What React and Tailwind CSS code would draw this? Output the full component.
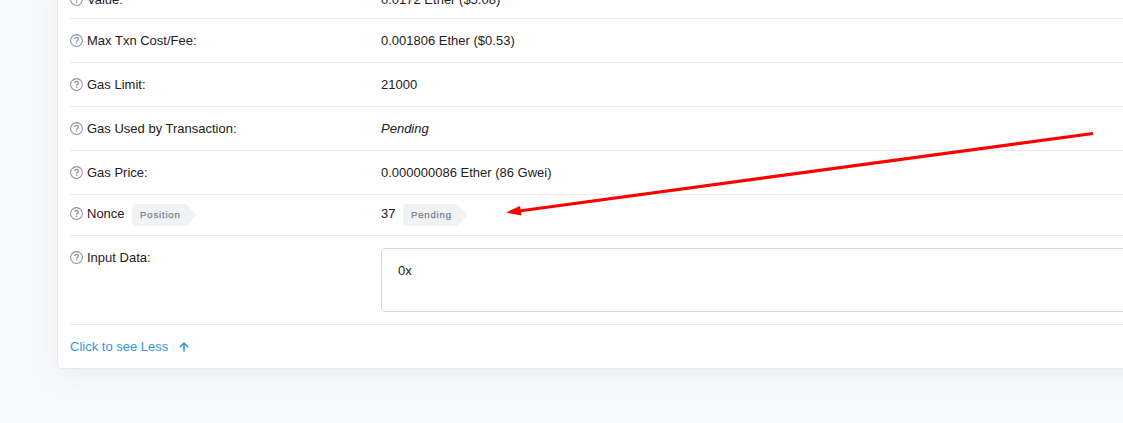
function HelpIcon({ className = "" }) {
  return (
    <svg className={"mr-1 h-[13px] w-[13px] shrink-0 " + className} viewBox="0 0 13 13" fill="none" stroke="#8792a0">
      <circle cx="6.5" cy="6.5" r="5.9" strokeWidth="1.05" />
      <path d="M4.7 5.1C4.8 3.9 5.6 3.4 6.5 3.4c1.1 0 1.9.6 1.9 1.6 0 1.3-1.8 1.3-1.8 2.7" strokeWidth="1.25" />
      <path d="M5.9 9.2h1.4" strokeWidth="1.3" />
    </svg>
  );
}

function Tag({ children }) {
  return (
    <span className="mt-[2px] ml-[7.5px] flex h-[22px] items-center">
      <span className="flex h-full w-[54px] items-center rounded-l-[4px] bg-[#f1f2f4] pl-2 text-[9.6px] tracking-[0.8px] text-[#77838f] [-webkit-text-stroke:0.25px_#77838f]">
        {children}
      </span>
      <svg className="h-[22px] w-[11px]" viewBox="0 0 11 22" fill="#f1f2f4">
        <path d="M0 0 L10.5 11 L0 22Z" />
      </svg>
    </span>
  );
}

function Row({ label, tag, className = "h-11", iconClass, children }) {
  return (
    <div className={"flex shrink-0 items-center border-b border-[#e7eaf3] " + className}>
      <div className="flex w-[311px] shrink-0 items-center">
        <HelpIcon className={iconClass} />
        <span>{label}</span>
        {tag}
      </div>
      {children}
    </div>
  );
}

export default function App() {
  return (
    <div className="relative h-[423px] w-[1123px] overflow-hidden bg-[#f8f9fb] font-['Liberation_Sans',Arial,sans-serif] text-[13px] leading-5 text-[#1e2022]">
      <div className="-mt-[25px] ml-[57px] flex h-[394px] w-[1140px] flex-col rounded-[4px] border border-[#e7eaf3] bg-white pl-3 shadow-[0_8px_24px_rgba(140,152,164,0.11)]">
        <Row label="Value:" className="h-[43px] pt-[6px]" iconClass="mb-[2px]">0.0172 Ether ($5.08)</Row>
        <Row label="Max Txn Cost/Fee:">0.001806 Ether ($0.53)</Row>
        <Row label="Gas Limit:">21000</Row>
        <Row label="Gas Used by Transaction:"><i>Pending</i></Row>
        <Row label="Gas Price:">0.000000086 Ether (86 Gwei)</Row>
        <Row label="Nonce" className="h-[41px] pb-[2px]" iconClass="mb-px" tag={<Tag>Position</Tag>}>
          <span>37</span>
          <Tag>Pending</Tag>
        </Row>
        <div className="flex h-[89px] shrink-0 items-start border-b border-[#e7eaf3] pt-3">
          <div className="flex w-[311px] shrink-0 items-center">
            <HelpIcon className="mb-px" />
            <span>Input Data:</span>
          </div>
          <div className="h-16 flex-1 rounded-[4px] border border-[#d5dae2] px-4 pt-3">0x</div>
        </div>
        <div className="flex flex-1 items-center text-[#3498db]">
          <span>Click to see Less</span>
          <svg className="mt-px ml-[11px] h-[10px] w-[10px]" viewBox="0 0 10 10" fill="none" stroke="#3498db" strokeWidth="1.5">
            <path d="M5 9.5V1.2M1 5.1L5 1.1L9 5.1" />
          </svg>
        </div>
      </div>
      <svg className="absolute top-[125px] left-[500px] h-[95px] w-[600px]" viewBox="500 125 600 95">
        <path d="M1093 133.5L519 210.9" stroke="#ff0000" strokeWidth="3" />
        <path d="M506 212.5L520 206L521.5 215.5Z" fill="#ff0000" />
      </svg>
    </div>
  );
}
